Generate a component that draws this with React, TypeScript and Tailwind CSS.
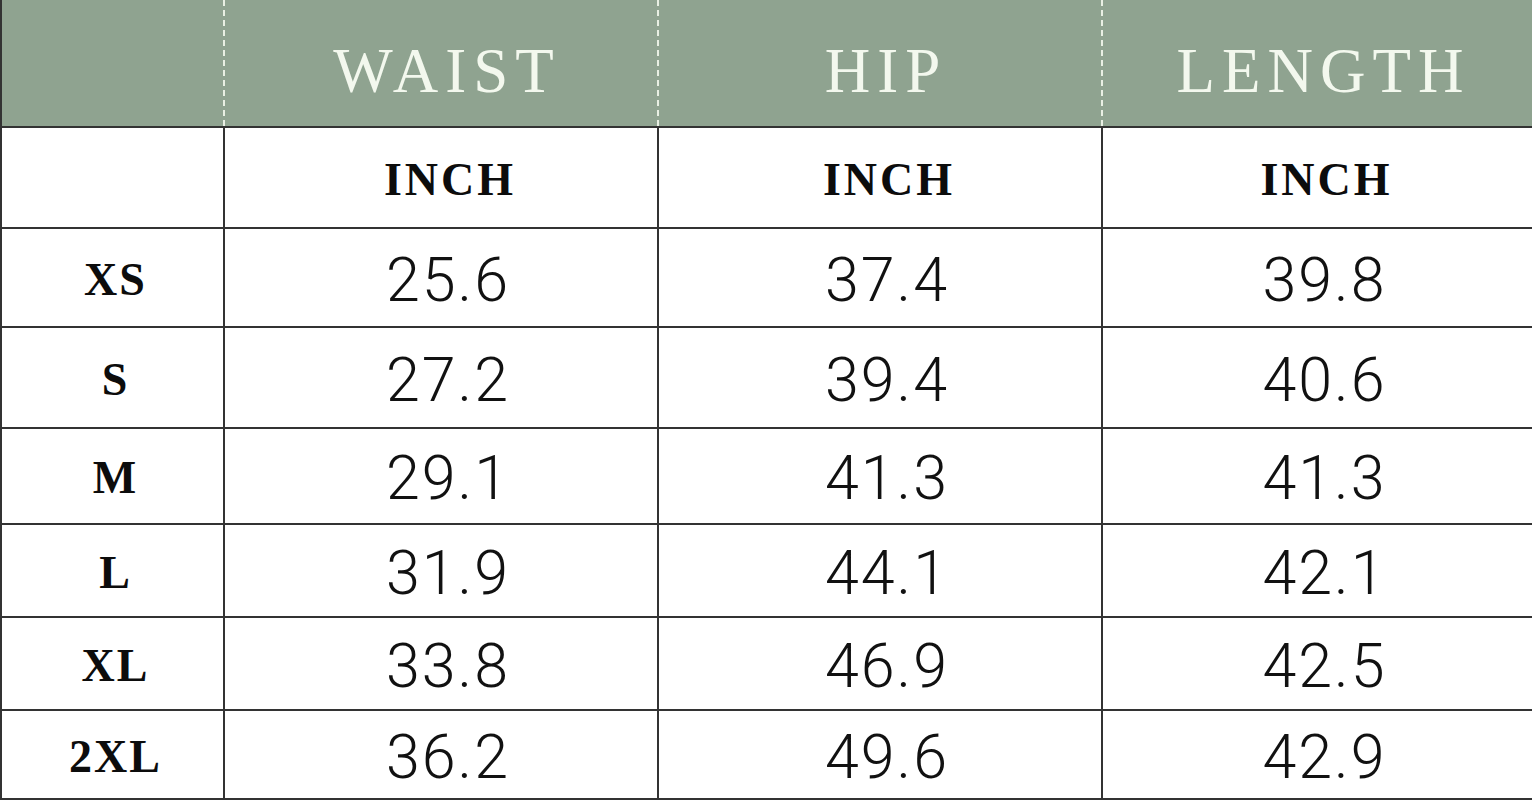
const rows = [
  { size: "XS", waist: "25.6", hip: "37.4", length: "39.8", h: "h-[99px]" },
  { size: "S", waist: "27.2", hip: "39.4", length: "40.6", h: "h-[101px]" },
  { size: "M", waist: "29.1", hip: "41.3", length: "41.3", h: "h-[96px]" },
  { size: "L", waist: "31.9", hip: "44.1", length: "42.1", h: "h-[93px]" },
  { size: "XL", waist: "33.8", hip: "46.9", length: "42.5", h: "h-[93px]" },
  { size: "2XL", waist: "36.2", hip: "49.6", length: "42.9", h: "h-[89px]" },
];

const serif = "font-['Liberation_Serif','Times_New_Roman',serif]";

const cols = "grid grid-cols-[223px_434px_444px_1fr]";
const line = "border-[#333]";

function HeaderCell({ label, last = false }: { label?: string; last?: boolean }) {
  return (
    <div
      className={`flex items-center justify-center pt-[16px] pl-[12px] ${
        last ? "" : "border-r-2 border-dashed border-[#e9f0e4]"
      }`}
    >
      {label && (
        <span className={`${serif} text-[63px] leading-none font-normal tracking-[7px] text-[#f3f8ee]`}>
          {label}
        </span>
      )}
    </div>
  );
}

function BodyCell({ children, last = false, kind }: { children?: React.ReactNode; last?: boolean; kind: "size" | "unit" | "num" }) {
  const text
    = kind === "num"
      ? "font-['Roboto','Liberation_Sans',Arial,sans-serif] text-[61px] font-light tracking-[2px] text-[#111] pl-[14px] pt-[5px]"
      : kind === "unit"
        ? `${serif} text-[46px] font-bold tracking-[3px] text-[#0c0c0c] pl-[18px] pt-[4px]`
        : `${serif} text-[46px] font-bold tracking-[2px] text-[#0c0c0c] pl-[6px] pt-[4px]`;
  return (
    <div className={`flex items-center justify-center leading-none ${last ? "" : `border-r-2 ${line}`} ${text}`}>
      {children}
    </div>
  );
}

export default function App() {
  return (
    <div className="h-[800px] w-[1532px] overflow-hidden bg-white">
      <div className={`h-full border-l-2 ${line}`}>
        <div className={`${cols} h-[128px] border-b-2 ${line} bg-[#8fa390]`}>
          <HeaderCell />
          <HeaderCell label="WAIST" />
          <HeaderCell label="HIP" />
          <HeaderCell label="LENGTH" last />
        </div>

        <div className={`${cols} h-[101px] border-b-2 ${line}`}>
          <BodyCell kind="size" />
          <BodyCell kind="unit">INCH</BodyCell>
          <BodyCell kind="unit">INCH</BodyCell>
          <BodyCell kind="unit" last>INCH</BodyCell>
        </div>

        {rows.map(row => (
          <div key={row.size} className={`${cols} ${row.h} border-b-2 ${line}`}>
            <BodyCell kind="size">{row.size}</BodyCell>
            <BodyCell kind="num">{row.waist}</BodyCell>
            <BodyCell kind="num">{row.hip}</BodyCell>
            <BodyCell kind="num" last>{row.length}</BodyCell>
          </div>
        ))}
      </div>
    </div>
  );
}
